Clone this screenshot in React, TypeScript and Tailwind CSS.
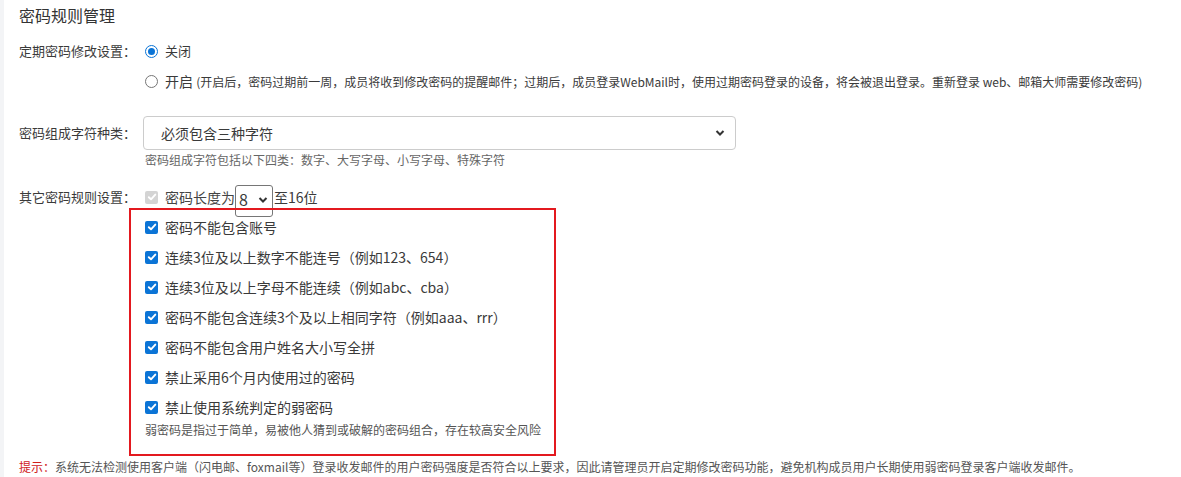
import React from "react";

const font = { fontFamily: '"Noto Sans CJK SC", "Noto Sans", sans-serif' };

function Check({ disabled }: { disabled?: boolean }) {
  return (
    <span
      className={
        "w-[13px] h-[13px] rounded-[2px] flex items-center justify-center shrink-0 " +
        (disabled ? "bg-[#d4d4d4]" : "bg-[#0b74d6]")
      }
    >
      <svg width="10" height="10" viewBox="0 0 10 10">
        <path d="M1.8 5.2 L4 7.3 L8.3 2.6" fill="none" stroke="#fff" strokeWidth="1.9" strokeLinecap="round" strokeLinejoin="round" />
      </svg>
    </span>
  );
}

function Radio({ checked }: { checked?: boolean }) {
  return checked ? (
    <span className="w-[13px] h-[13px] rounded-full border-[1.5px] border-[#0b74d6] flex items-center justify-center shrink-0">
      <span className="w-[7px] h-[7px] rounded-full bg-[#0b74d6]" />
    </span>
  ) : (
    <span className="w-[13px] h-[13px] rounded-full border border-[#767676] shrink-0" />
  );
}

const items = [
  "密码不能包含账号",
  "连续3位及以上数字不能连号（例如123、654）",
  "连续3位及以上字母不能连续（例如abc、cba）",
  "密码不能包含连续3个及以上相同字符（例如aaa、rrr）",
  "密码不能包含用户姓名大小写全拼",
  "禁止采用6个月内使用过的密码",
  "禁止使用系统判定的弱密码",
];

export default function App() {
  return (
    <div className="w-[1181px] h-[477px] bg-white flex overflow-hidden text-[#3a3a3a]" style={font}>
      <div className="w-[4px] h-full bg-[#f3f4f6] shrink-0" />
      <div className="flex flex-col pl-[15px] flex-1">
        <div className="h-[36px] pt-[4px] text-[16px] leading-[22px] text-[#333]">密码规则管理</div>

        <div className="flex">
          <div className="w-[124px] shrink-0 h-[30px] flex items-center text-[13px]">定期密码修改设置：</div>
          <div className="flex flex-col">
            <div className="h-[30px] flex items-center pl-[2px] gap-[7px]">
              <Radio checked />
              <span className="text-[13px]">关闭</span>
            </div>
            <div className="h-[30px] flex items-center pl-[2px] gap-[7px]">
              <Radio />
              <span className="text-[14px] whitespace-nowrap">
                开启 <span className="text-[12px]">(开启后，密码过期前一周，成员将收到修改密码的提醒邮件；过期后，成员登录WebMail时，使用过期密码登录的设备，将会被退出登录。重新登录 web、邮箱大师需要修改密码)</span>
              </span>
            </div>
          </div>
        </div>

        <div className="flex mt-[20px]">
          <div className="w-[124px] shrink-0 h-[34px] flex items-center text-[13px]">密码组成字符种类：</div>
          <div className="flex flex-col">
            <div className="w-[593px] h-[34px] border border-[#cccccc] rounded-[4px] flex items-center justify-between pl-[17px] pr-[10px]">
              <span className="text-[14px]">必须包含三种字符</span>
              <svg width="10" height="8" viewBox="0 0 10 8">
                <path d="M1.5 2 L5 5.5 L8.5 2" fill="none" stroke="#333" strokeWidth="2" />
              </svg>
            </div>
            <div className="h-[18px] mt-[1px] flex items-center pl-[2px] text-[12px] text-[#666]">密码组成字符包括以下四类：数字、大写字母、小写字母、特殊字符</div>
          </div>
        </div>

        <div className="flex mt-[17px]">
          <div className="w-[124px] shrink-0 h-[22px] flex items-center text-[13px]">其它密码规则设置：</div>
          <div className="flex flex-col">
            <div className="h-[22px] flex items-center pl-[2px]">
              <Check disabled />
              <span className="text-[14px] ml-[7px] text-[#444]">密码长度为</span>
              <span className="relative h-[22px] w-[38px]">
                <span className="absolute left-0 top-[-1px] w-[38px] h-[32px] border border-[#767676] rounded-[3px] flex items-start pt-[2px] justify-between pl-[3px] pr-[4px] bg-white">
                  <span className="text-[16px] leading-[22px]">8</span>
                  <svg width="10" height="8" viewBox="0 0 10 8" className="mt-[8px]">
                    <path d="M1.5 2 L5 5.5 L8.5 2" fill="none" stroke="#333" strokeWidth="2" />
                  </svg>
                </span>
              </span>
              <span className="text-[14px] ml-[1px]">至16位</span>
            </div>
            <div className="relative ml-[-14px] w-[427px] border-2 border-[#e3191f] pl-[14px] pt-[2px] pb-[16px]">
              {items.map((t) => (
                <div key={t} className="h-[30px] flex items-center gap-[7px]">
                  <Check />
                  <span className="text-[14px] whitespace-nowrap">{t}</span>
                </div>
              ))}
              <div className="h-[16px] flex items-center text-[12px] text-[#555] whitespace-nowrap">弱密码是指过于简单，易被他人猜到或破解的密码组合，存在较高安全风险</div>
            </div>
          </div>
        </div>

        <div className="h-[16px] mt-[3px] flex items-center text-[12px] text-[#555] whitespace-nowrap">
          <span className="text-[#d0201c]">提示：</span>
          系统无法检测使用客户端（闪电邮、foxmail等）登录收发邮件的用户密码强度是否符合以上要求，因此请管理员开启定期修改密码功能，避免机构成员用户长期使用弱密码登录客户端收发邮件。
        </div>
      </div>
    </div>
  );
}
